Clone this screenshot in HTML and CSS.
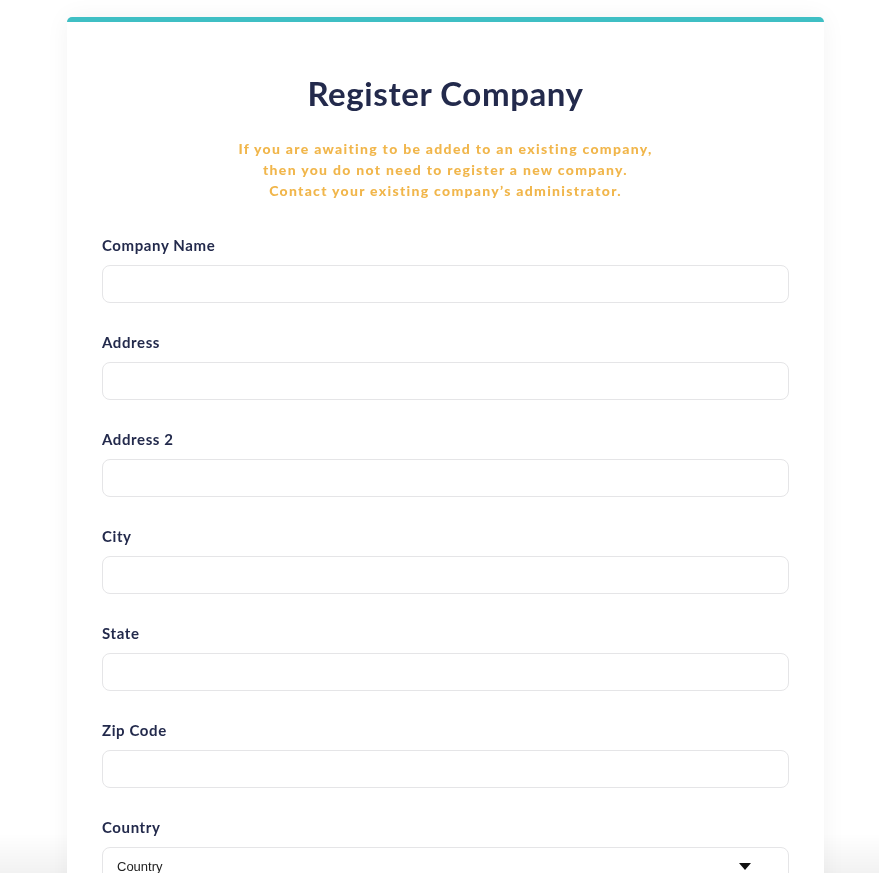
FILE: index.html
```html
<!DOCTYPE html>
<html>
<head>
<meta charset="utf-8">
<title>Register Company</title>
<link rel="stylesheet" href="styles.css">
</head>
<body>
<div class="page">
  <div class="card">
    <h1 class="title">Register Company</h1>
    <p class="notice">If you are awaiting to be added to an existing company,<br>then you do not need to register a new company.<br>Contact your existing company’s administrator.</p>
    <form class="form">
      <div class="field"><label class="label">Company Name</label><input class="input" type="text"></div>
      <div class="field"><label class="label">Address</label><input class="input" type="text"></div>
      <div class="field"><label class="label">Address 2</label><input class="input" type="text"></div>
      <div class="field"><label class="label">City</label><input class="input" type="text"></div>
      <div class="field"><label class="label">State</label><input class="input" type="text"></div>
      <div class="field"><label class="label">Zip Code</label><input class="input" type="text"></div>
      <div class="field"><label class="label">Country</label>
        <div class="select"><span class="select-text">Country</span><span class="caret"></span></div>
      </div>
    </form>
  </div>
</div>
<div class="bottom-fade"></div>
</body>
</html>
```

FILE: styles.css
```css
html, body {
  margin: 0;
  padding: 0;
  background: #ffffff;
}
body {
  font-family: "Lato", "Liberation Sans", sans-serif;
  color: #232a4c;
}
.page {
  padding: 17px 55px 0 67px;
  position: relative;
  z-index: 1;
}
.card {
  background: #fff;
  border-top: 5px solid #3fbfc4;
  border-radius: 5px 5px 0 0;
  box-shadow: 0 0 24px rgba(0, 0, 0, 0.05);
  padding: 51px 35px 60px;
}
.title {
  margin: 0;
  text-align: center;
  font-size: 33px;
  line-height: 40px;
  font-weight: 700;
  letter-spacing: 0.6px;
  color: #232a4c;
}
.notice {
  margin: 25px 0 0;
  text-align: center;
  font-size: 14px;
  line-height: 21px;
  font-weight: 900;
  letter-spacing: 1.3px;
  color: #f1b64b;
}
.form {
  margin-top: 34px;
  display: flex;
  flex-direction: column;
  gap: 29px;
}
.field {
  display: flex;
  flex-direction: column;
  gap: 10px;
}
.label {
  font-size: 15px;
  line-height: 20px;
  font-weight: 700;
  letter-spacing: 0.6px;
  color: #232a4c;
}
.input {
  box-sizing: border-box;
  height: 38px;
  width: 100%;
  border: 1px solid #e5e5e7;
  border-radius: 8px;
  background: #fff;
  margin: 0;
  outline: none;
}
.select {
  box-sizing: border-box;
  height: 38px;
  border: 1px solid #e5e5e7;
  border-radius: 8px;
  display: flex;
  align-items: center;
  justify-content: space-between;
  padding: 0 37px 0 14px;
}
.select-text {
  font-family: "Liberation Sans", Arial, sans-serif;
  font-size: 13px;
  color: #222;
}
.caret {
  width: 0;
  height: 0;
  border-left: 6px solid transparent;
  border-right: 6px solid transparent;
  border-top: 7px solid #111;
}
.bottom-fade {
  position: fixed;
  left: 0;
  right: 0;
  bottom: 0;
  height: 40px;
  background: linear-gradient(to bottom, rgba(0,0,0,0), rgba(0,0,0,0.05));
  z-index: 0;
}
```
